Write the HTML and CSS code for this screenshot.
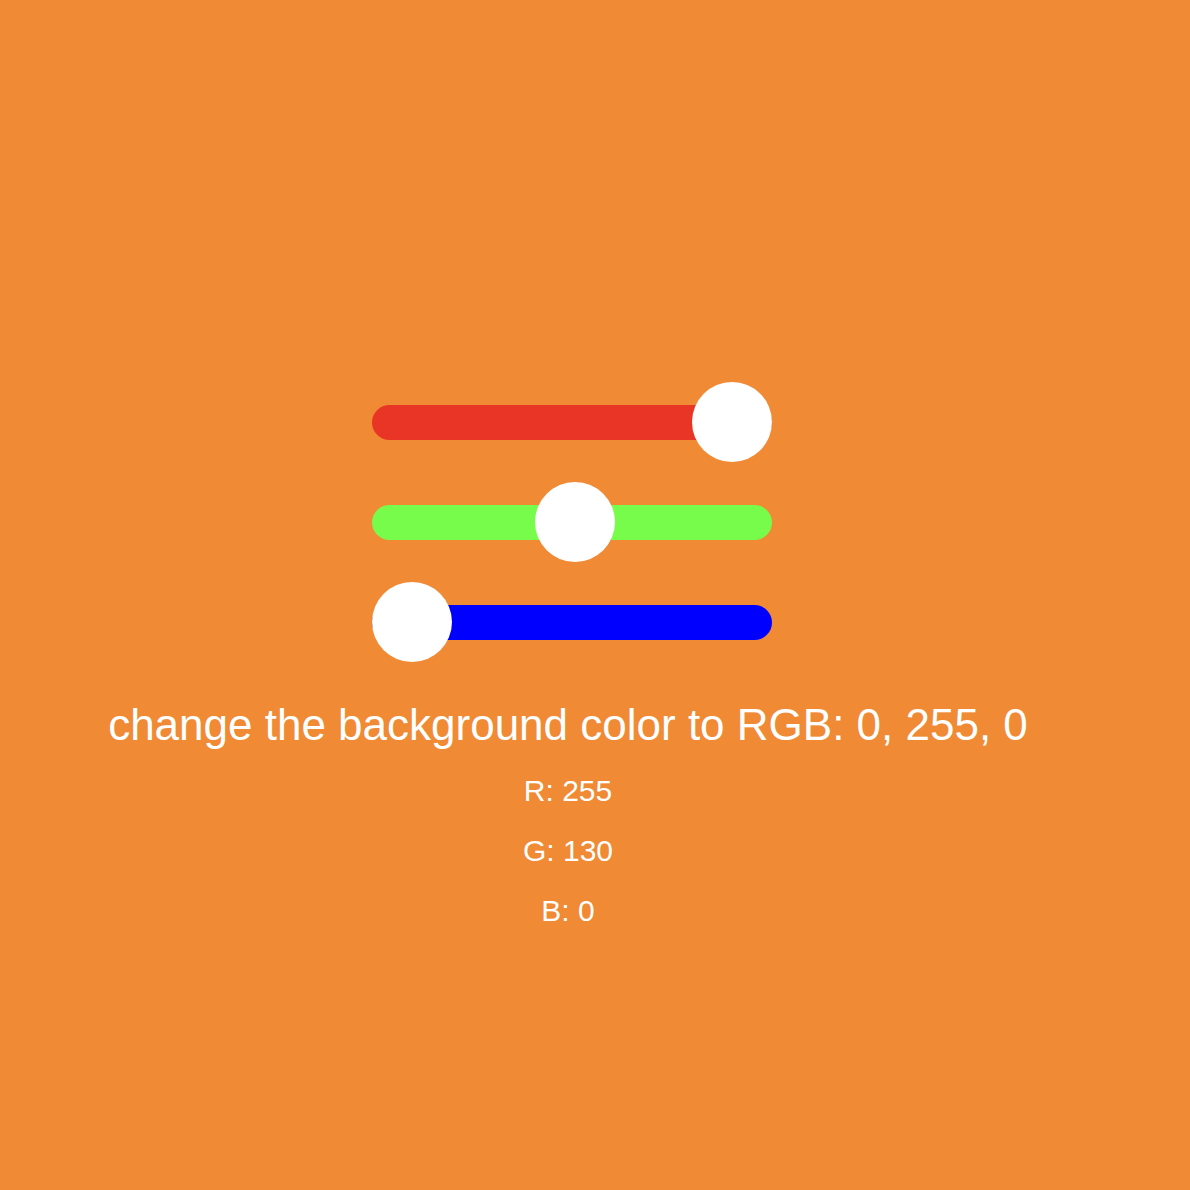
FILE: index.html
```html
<!DOCTYPE html>
<html>
<head>
<meta charset="utf-8">
<link rel="stylesheet" href="styles.css">
</head>
<body>
<main class="page">
  <section class="sliders">
    <div class="slider">
      <div class="track red"></div>
      <div class="thumb" style="left: 320px"></div>
    </div>
    <div class="slider">
      <div class="track green"></div>
      <div class="thumb" style="left: 163px"></div>
    </div>
    <div class="slider">
      <div class="track blue"></div>
      <div class="thumb" style="left: 0px"></div>
    </div>
  </section>
  <section class="info">
    <h1 class="task">change the background color to RGB: 0, 255, 0</h1>
    <p class="value">R: 255</p>
    <p class="value">G: 130</p>
    <p class="value">B: 0</p>
  </section>
</main>
</body>
</html>
```

FILE: styles.css
```css
html, body {
  margin: 0;
  padding: 0;
  background: #F08A35;
}
body {
  width: 1190px;
  height: 1190px;
  overflow: hidden;
  font-family: "Liberation Sans", Arial, Helvetica, sans-serif;
  color: #ffffff;
}
.page {
  padding-top: 382px;
  display: flex;
  flex-direction: column;
}
.sliders {
  width: 1144px;
  display: flex;
  flex-direction: column;
  align-items: center;
  gap: 20px;
}
.slider {
  position: relative;
  width: 400px;
  height: 80px;
  display: flex;
  align-items: center;
}
.track {
  width: 400px;
  height: 35px;
  border-radius: 17.5px;
}
.red { background: #E93525; }
.green { background: #77FC4C; }
.blue { background: #0000FF; }
.thumb {
  position: absolute;
  top: 0;
  width: 80px;
  height: 80px;
  border-radius: 50%;
  background: #ffffff;
}
.info {
  width: 1136px;
  display: flex;
  flex-direction: column;
  align-items: center;
  margin-top: 35px;
}
.task {
  margin: 0;
  font-size: 44px;
  font-weight: normal;
  line-height: 56px;
}
.value {
  margin: 0;
  font-size: 30px;
  line-height: 60px;
}
.task + .value {
  margin-top: 8px;
}
```
